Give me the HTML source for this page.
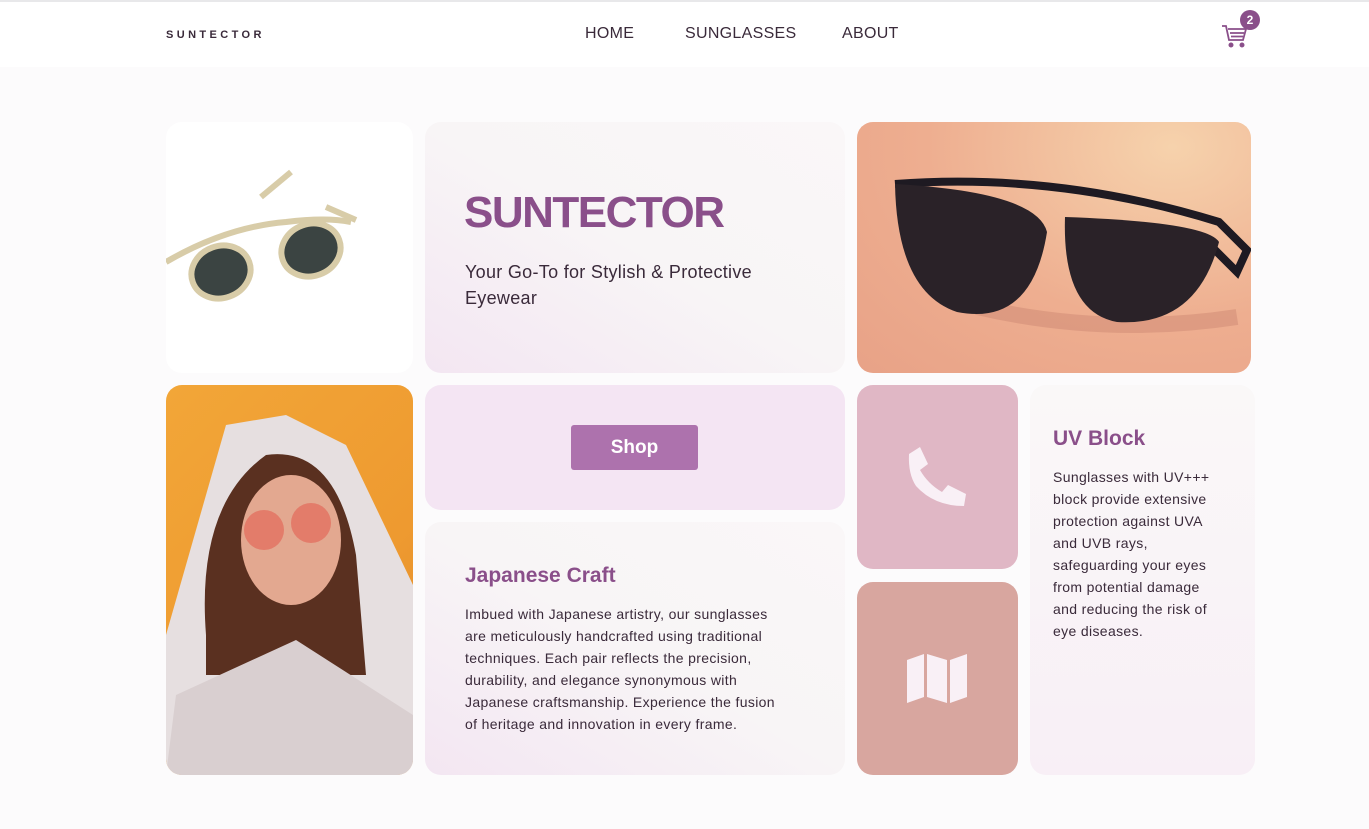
<!DOCTYPE html>
<html><head><meta charset="utf-8"><style>
*{margin:0;padding:0;box-sizing:border-box}
body{width:1369px;height:829px;background:#fcfbfc;font-family:"Liberation Sans",sans-serif;color:#3a2a3a;position:relative;overflow:hidden}
.hdr{position:absolute;left:0;top:0;width:1369px;height:67px;background:#fff;border-top:2px solid #e8e8ea}
.logo{position:absolute;left:166px;top:27px;font-size:11px;font-weight:bold;letter-spacing:3.4px;color:#3a2a3a}
.nav{position:absolute;top:23px;font-size:16px;color:#3a2a3a;letter-spacing:.3px}
.c{position:absolute;border-radius:16px;overflow:hidden}
.h{color:#8a4f8a;font-weight:bold}
p.t{font-size:14px;line-height:22px;color:#3a2a3a;letter-spacing:.35px}
</style></head><body>
<div class="hdr">
<div class="logo">SUNTECTOR</div>
<div class="nav" style="left:585px">HOME</div>
<div class="nav" style="left:685px">SUNGLASSES</div>
<div class="nav" style="left:842px">ABOUT</div>
<svg style="position:absolute;left:1221px;top:21px" width="28" height="26" viewBox="0 0 28 26" fill="none" stroke="#8a4f8a" stroke-width="1.8"><path d="M1 3h4l3 14h14l3-11H7"/><path d="M9 10h14M10 13.5h12"/><circle cx="10" cy="22" r="1.6" fill="#8a4f8a"/><circle cx="21" cy="22" r="1.6" fill="#8a4f8a"/></svg>
<div style="position:absolute;left:1240px;top:8px;width:20px;height:20px;border-radius:50%;background:#8a4f8a;color:#fff;font-size:12px;font-weight:bold;text-align:center;line-height:20px">2</div>
</div>

<div class="c" style="left:166px;top:122px;width:247px;height:251px;background:#fff">
<svg width="247" height="251" viewBox="0 0 247 251"><g fill="none" stroke="#d8cca8" stroke-width="6"><path d="M0 140 Q60 105 120 100 Q160 95 185 100"/><path d="M95 75 L125 50"/><path d="M160 85 L190 98"/></g>
<ellipse cx="55" cy="150" rx="30" ry="26" fill="#3b4442" stroke="#d8cca8" stroke-width="6" transform="rotate(-20 55 150)"/>
<ellipse cx="145" cy="128" rx="30" ry="26" fill="#3b4442" stroke="#d8cca8" stroke-width="6" transform="rotate(-20 145 128)"/></svg>
</div>
<div class="c" style="left:425px;top:122px;width:420px;height:251px;background:linear-gradient(30deg,#f3e6f2,#f8f5f6 50%,#faf7f8)">
<div class="h" style="position:absolute;left:39px;top:66px;font-size:44px;letter-spacing:-1.5px">SUNTECTOR</div>
<div style="position:absolute;left:40px;top:137px;font-size:18px;line-height:26px;width:320px;letter-spacing:.3px">Your Go-To for Stylish &amp; Protective Eyewear</div>
</div>
<div class="c" style="left:857px;top:122px;width:394px;height:251px;background:radial-gradient(ellipse at 80% 10%,#f6d2ac,#eeae90 55%,#e8a287)">
<svg width="394" height="251" viewBox="0 0 394 251">
<path d="M120 185 Q250 215 380 195" fill="none" stroke="#c98471" stroke-width="16" opacity=".45"/>
<path d="M38 62 Q200 50 362 100 L390 128 L380 150 L350 120 Q300 115 270 128" fill="none" stroke="#1e1a22" stroke-width="8"/>
<path d="M38 62 Q40 170 100 190 Q175 205 190 110 Q180 70 38 62Z" fill="#2a2228"/>
<path d="M208 95 Q205 190 260 200 Q340 205 362 120 Q350 100 208 95Z" fill="#2a2228"/>
</svg>
</div>

<div class="c" style="left:166px;top:385px;width:247px;height:390px;background:linear-gradient(135deg,#f2a638,#ee9a30 60%,#e08a2a)">
<svg width="247" height="390" viewBox="0 0 247 390"><path d="M0 250 L60 40 L120 30 L180 60 L247 200 L247 390 L0 390Z" fill="#e6dfe0"/>
<path d="M40 250 Q30 120 100 70 Q170 60 190 170 L200 290 L40 290Z" fill="#5a3020"/>
<ellipse cx="125" cy="155" rx="50" ry="65" fill="#e3a890"/>
<circle cx="98" cy="145" r="20" fill="#e27060" opacity=".8"/><circle cx="145" cy="138" r="20" fill="#e27060" opacity=".8"/>
<path d="M10 310 L130 255 L247 330 L247 390 L0 390Z" fill="#d9cfd0"/></svg>
</div>
<div class="c" style="left:425px;top:385px;width:420px;height:125px;background:#f4e5f3">
<div style="position:absolute;left:146px;top:40px;width:127px;height:45px;background:#ad72ad;border-radius:3px;color:#fff;font-weight:bold;font-size:19px;text-align:center;line-height:45px">Shop</div>
</div>
<div class="c" style="left:425px;top:522px;width:420px;height:253px;background:linear-gradient(30deg,#f3e6f2,#f8f5f6 50%,#faf7f8)">
<div class="h" style="position:absolute;left:40px;top:42px;font-size:21px">Japanese Craft</div>
<p class="t" style="position:absolute;left:40px;top:81px;width:325px">Imbued with Japanese artistry, our sunglasses are meticulously handcrafted using traditional techniques. Each pair reflects the precision, durability, and elegance synonymous with Japanese craftsmanship. Experience the fusion of heritage and innovation in every frame.</p>
</div>
<div class="c" style="left:857px;top:385px;width:161px;height:184px;background:#e0b7c5">
<svg style="position:absolute;left:49px;top:61px" width="62" height="62" viewBox="0 0 62 62"><path d="M3 8 L14 1 L22 18 L14 24 Q22 38 36 46 L42 39 L60 48 L58 60 Q28 60 10 40 Q2 28 3 8Z" fill="#f9f0f6"/></svg>
</div>
<div class="c" style="left:857px;top:582px;width:161px;height:193px;background:#d8a69f">
<svg style="position:absolute;left:49px;top:72px" width="62" height="50" viewBox="0 0 62 50"><path d="M1 6 L18 0 L18 43 L1 49Z M21 0 L41 6 L41 49 L21 43Z M44 6 L61 0 L61 43 L44 49Z" fill="#f9f0f6"/></svg>
</div>
<div class="c" style="left:1030px;top:385px;width:225px;height:390px;background:linear-gradient(180deg,#faf8f8,#f8eff6)">
<div class="h" style="position:absolute;left:23px;top:42px;font-size:21px">UV Block</div>
<p class="t" style="position:absolute;left:23px;top:81px;width:172px">Sunglasses with UV+++ block provide extensive protection against UVA and UVB rays, safeguarding your eyes from potential damage and reducing the risk of eye diseases.</p>
</div>
</body></html>
